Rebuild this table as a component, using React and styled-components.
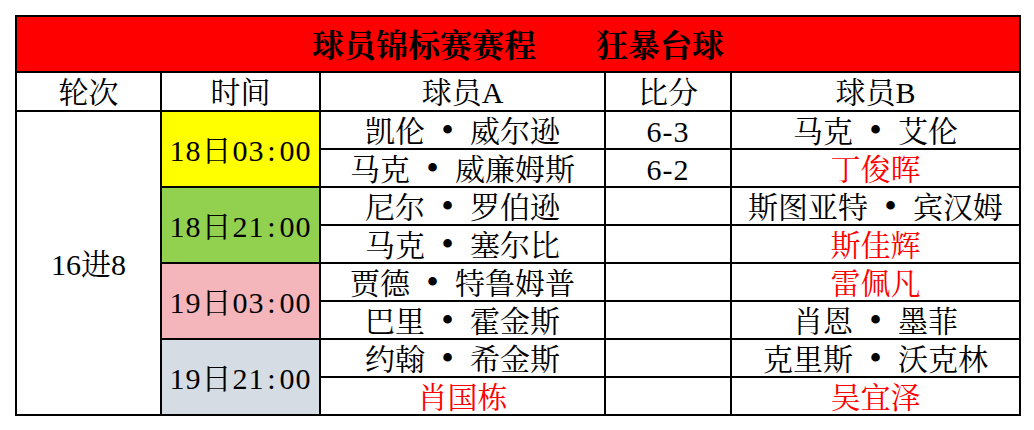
import styled, { createGlobalStyle } from "styled-components";

const GlobalStyle = createGlobalStyle`
    body {
        margin: 0;
        background: #ffffff;
        font-family: "Liberation Serif", "Noto Serif CJK SC", "Noto Sans CJK SC", serif;
    }
`

const Page = styled.div`
    padding: 15px 0 0 15px;
`

const Table = styled.table`
    border-collapse: collapse;
    width: 1004px;
    table-layout: fixed;
    border: 2px solid #000;
`

const Row = styled.tr`
    height: ${props => props.$h || 38}px;
`

const TitleCell = styled.td`
    background-color: #ff0000;
    border: 2px solid #000;
    text-align: center;
    font-size: 32px;
    font-weight: bold;
    line-height: 40px;
    color: #000;
    padding: 4px 0 0;
    white-space: nowrap;
`

const TitleGap = styled.span`
    display: inline-block;
    width: 60px;
`

const Cell = styled.td`
    border: 2px solid #000;
    text-align: center;
    vertical-align: middle;
    font-size: 30px;
    line-height: 32px;
    padding: 3px 0 0;
    white-space: nowrap;
    overflow: hidden;
    letter-spacing: ${props => props.$spaced ? '1px' : '0'};
    color: ${props => props.$red ? '#ff0000' : '#000'};
    background-color: ${props => props.$bg || 'transparent'};
`

const Dot = styled.span`
    display: inline-block;
    width: 1.25em;
    font-size: 1.2em;
    line-height: 0;
    text-align: center;
`

const Colon = styled.span`
    display: inline-block;
    width: 0.5em;
    text-align: center;
`

const matches = [
    { time: ['18日03', '00'], bg: '#ffff00', games: [
        { a: ['凯伦', '威尔逊'], score: '6-3', b: ['马克', '艾伦'] },
        { a: ['马克', '威廉姆斯'], score: '6-2', b: ['丁俊晖'], bRed: true },
    ]},
    { time: ['18日21', '00'], bg: '#92d050', games: [
        { a: ['尼尔', '罗伯逊'], score: '', b: ['斯图亚特', '宾汉姆'] },
        { a: ['马克', '塞尔比'], score: '', b: ['斯佳辉'], bRed: true },
    ]},
    { time: ['19日03', '00'], bg: '#f4b6bb', games: [
        { a: ['贾德', '特鲁姆普'], score: '', b: ['雷佩凡'], bRed: true },
        { a: ['巴里', '霍金斯'], score: '', b: ['肖恩', '墨菲'] },
    ]},
    { time: ['19日21', '00'], bg: '#d6dce4', games: [
        { a: ['约翰', '希金斯'], score: '', b: ['克里斯', '沃克林'] },
        { a: ['肖国栋'], aRed: true, score: '', b: ['吴宜泽'], bRed: true },
    ]},
]

function Name ({ parts }) {
    if (parts.length === 1) return parts[0]
    return <>{parts[0]}<Dot>•</Dot>{parts[1]}</>
}

function App () {
    return (
        <Page>
            <GlobalStyle />
            <Table>
                <colgroup>
                    <col style={{ width: 145 }} />
                    <col style={{ width: 159 }} />
                    <col style={{ width: 285 }} />
                    <col style={{ width: 126 }} />
                    <col style={{ width: 289 }} />
                </colgroup>
                <tbody>
                    <Row $h={56}>
                        <TitleCell colSpan={5}>球员锦标赛赛程<TitleGap />狂暴台球</TitleCell>
                    </Row>
                    <Row $h={39}>
                        <Cell>轮次</Cell>
                        <Cell>时间</Cell>
                        <Cell>球员A</Cell>
                        <Cell>比分</Cell>
                        <Cell>球员B</Cell>
                    </Row>
                    {matches.map((m, i) => m.games.map((g, j) => (
                        <Row key={`${i}-${j}`}>
                            {i === 0 && j === 0 && <Cell rowSpan={8}>16进8</Cell>}
                            {j === 0 && (
                                <Cell rowSpan={2} $bg={m.bg} $spaced>
                                    {m.time[0]}<Colon>:</Colon>{m.time[1]}
                                </Cell>
                            )}
                            <Cell $red={g.aRed}><Name parts={g.a} /></Cell>
                            <Cell $spaced>{g.score}</Cell>
                            <Cell $red={g.bRed}><Name parts={g.b} /></Cell>
                        </Row>
                    )))}
                </tbody>
            </Table>
        </Page>
    )
}

export default App
